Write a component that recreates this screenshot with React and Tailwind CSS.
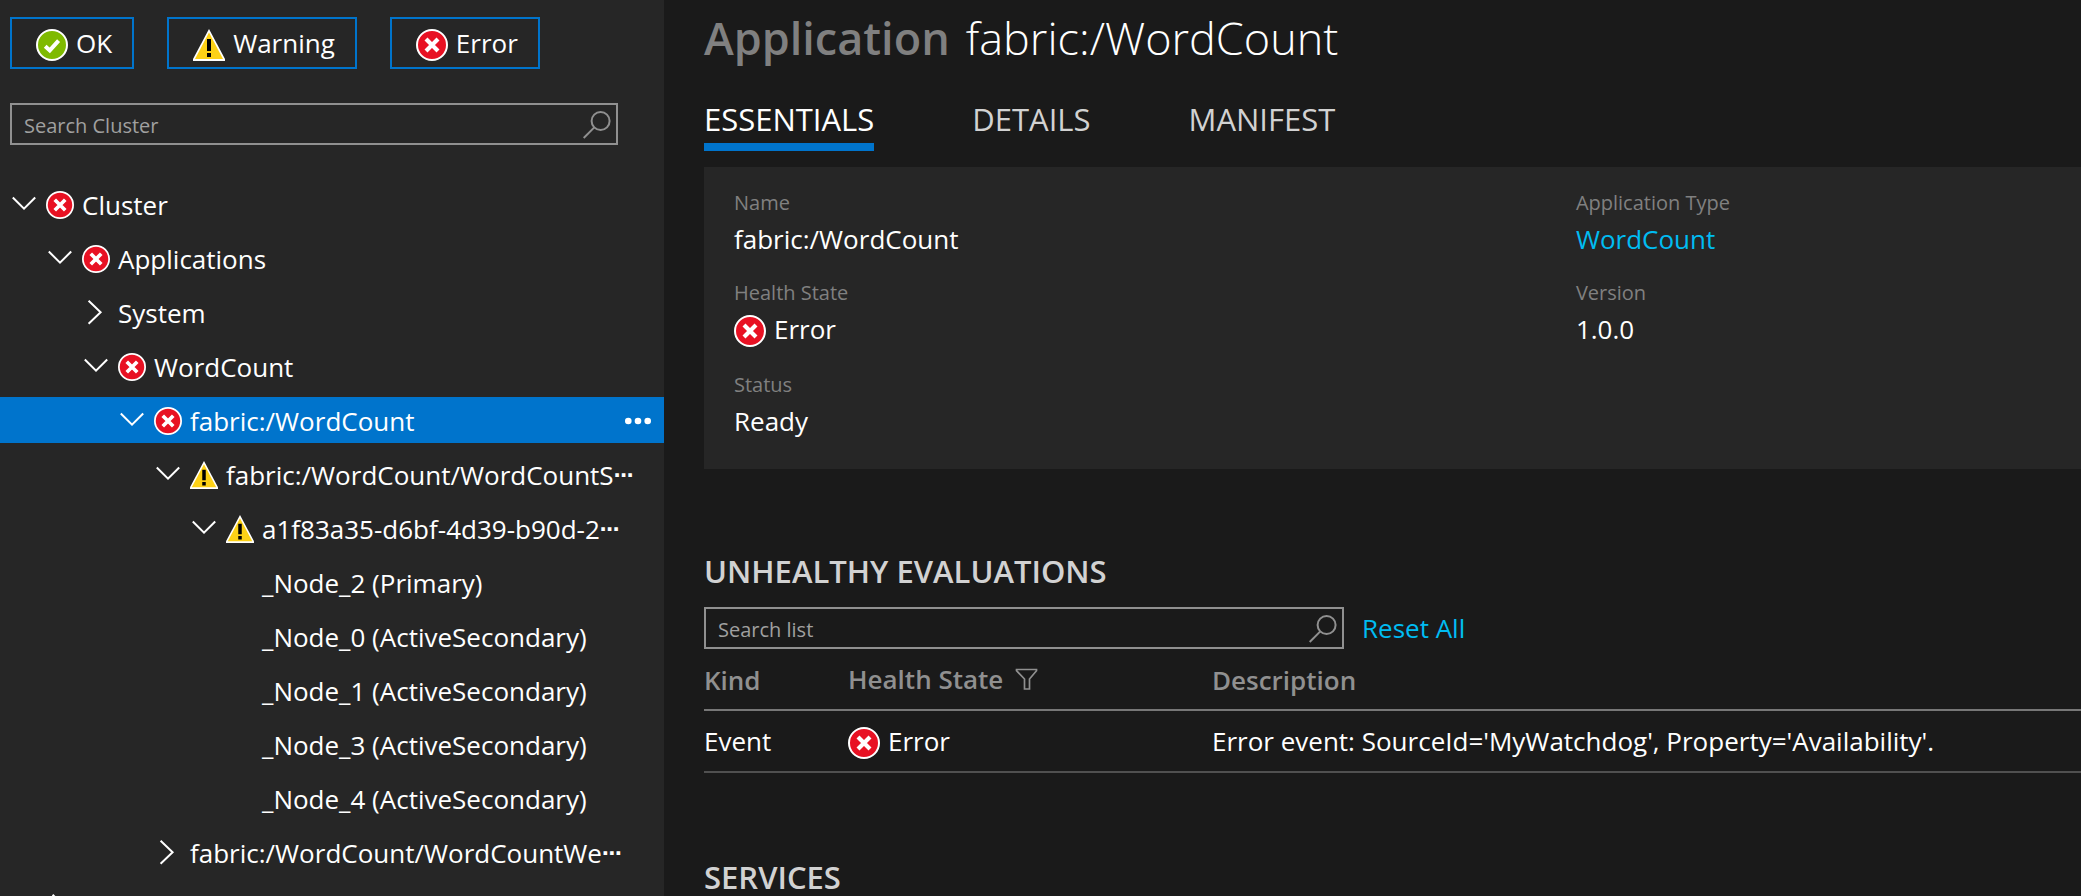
import { useState } from 'react';

function OkIcon({ className }) {
  return (
    <svg viewBox="0 0 32 32" className={className} aria-hidden="true">
      <circle cx="16" cy="16" r="15" fill="#7fba00" stroke="#fff" strokeWidth="2" />
      <path d="M9.2 17.2l4.6 4.2L22.6 11.6" fill="none" stroke="#fff" strokeWidth="4" />
    </svg>
  );
}

function WarningIcon({ className }) {
  return (
    <svg viewBox="0 0 32 32" className={className} aria-hidden="true">
      <path d="M16 0L32 30v2H0v-2z" fill="#fff" />
      <path d="M16 3.6L30 30H2z" fill="#fdd116" />
      <path d="M14 10h4v12h-4zM14 24h4v4h-4z" fill="#000" />
    </svg>
  );
}

function ErrorIcon({ className }) {
  return (
    <svg viewBox="0 0 32 32" className={className} aria-hidden="true">
      <circle cx="16" cy="16" r="15" fill="#e81123" stroke="#fff" strokeWidth="2" />
      <path d="M10 10l12 12M22 10L10 22" fill="none" stroke="#fff" strokeWidth="4.2" />
    </svg>
  );
}

const stateIcons = { ok: OkIcon, warning: WarningIcon, error: ErrorIcon };

function StateLabel({ state, children }) {
  const Icon = stateIcons[state];
  return (
    <span className="flex items-center gap-2">
      <Icon className="mt-1 size-8 shrink-0" />
      <span>{children}</span>
    </span>
  );
}

function FilterButton({ state, children }) {
  return (
    <button type="button" className="flex h-[52px] items-center border-2 border-[#0074cc] pr-5 pl-6">
      <StateLabel state={state}>{children}</StateLabel>
    </button>
  );
}

function SearchBox({ label, className }) {
  return (
    <label className={`flex h-[42px] items-center border-2 border-[#909090] pt-0.5 pr-[5px] pl-3 ${className}`}>
      <input
        type="text"
        aria-label={label}
        placeholder={label}
        className="h-full min-w-0 flex-1 bg-transparent text-[20px] text-white outline-none placeholder:text-[#a0a0a0]"
      />
      <svg viewBox="0 0 28 28" className="size-7 shrink-0" fill="none" stroke="#909090" strokeWidth="2" aria-hidden="true">
        <circle cx="17.6" cy="10" r="9" />
        <path d="M11.3 16.4L.7 27" />
      </svg>
    </label>
  );
}

function Chevron({ open }) {
  return (
    <svg viewBox="0 0 24 26" className="h-[26px] w-6 shrink-0" fill="none" stroke="#fff" strokeWidth="2" aria-hidden="true">
      {open ? <path d="M.8 5.5L12 16.7 23.2 5.5" /> : <path d="M4.6 .8L16.6 12.3 4.6 23.8" />}
    </svg>
  );
}

const indents = ['pl-3', 'pl-12', 'pl-[84px]', 'pl-[120px]', 'pl-[156px]', 'pl-[192px]', 'pl-[228px]'];

const tree = [
  { level: 0, label: 'Cluster', state: 'error', open: true },
  { level: 1, label: 'Applications', state: 'error', open: true },
  { level: 2, label: 'System', open: false },
  { level: 2, label: 'WordCount', state: 'error', open: true },
  { level: 3, label: 'fabric:/WordCount', state: 'error', open: true, selected: true },
  { level: 4, label: 'fabric:/WordCount/WordCountS', cut: true, state: 'warning', open: true },
  { level: 5, label: 'a1f83a35-d6bf-4d39-b90d-2', cut: true, state: 'warning', open: true },
  { level: 6, label: '_Node_2 (Primary)' },
  { level: 6, label: '_Node_0 (ActiveSecondary)' },
  { level: 6, label: '_Node_1 (ActiveSecondary)' },
  { level: 6, label: '_Node_3 (ActiveSecondary)' },
  { level: 6, label: '_Node_4 (ActiveSecondary)' },
  { level: 4, label: 'fabric:/WordCount/WordCountWe', cut: true, open: false },
  { level: 1, label: '', open: false },
];

function TreeRow({ item }) {
  const Icon = item.state && stateIcons[item.state];
  const expandable = item.open !== undefined;
  return (
    <li className={`flex h-[46px] shrink-0 items-center pt-0.5 pr-3 ${indents[item.level]} ${item.selected ? 'bg-[#0074cc]' : ''}`}>
      {expandable ? (
        <button type="button" aria-label={item.open ? 'Collapse' : 'Expand'} className="mr-2.5">
          <Chevron open={item.open} />
        </button>
      ) : (
        <span className="mr-2.5 w-6" />
      )}
      {Icon && <Icon className="mr-2 size-7 shrink-0" />}
      <a href="#" className="flex items-center whitespace-nowrap">
        {item.label}
        {item.cut && <span className="font-['DejaVu_Sans',sans-serif] text-[20px] font-bold">⋯</span>}
      </a>
      {item.selected && (
        <button type="button" aria-label="Actions" className="ml-auto">
          <svg viewBox="0 0 28 12" className="h-3 w-7" fill="#fff" aria-hidden="true">
            <circle cx="4.3" cy="6" r="3.3" />
            <circle cx="14" cy="6" r="3.3" />
            <circle cx="23.7" cy="6" r="3.3" />
          </svg>
        </button>
      )}
    </li>
  );
}

function Field({ label, children }) {
  return (
    <div className="flex flex-col gap-1.5">
      <dt className="text-[20px] leading-6 text-[#808080]">{label}</dt>
      <dd className="leading-9">{children}</dd>
    </div>
  );
}

function SectionTitle({ children }) {
  return <h2 className="text-[31px] leading-10 font-semibold text-[#d2d2d2]">{children}</h2>;
}

const tabs = ['ESSENTIALS', 'DETAILS', 'MANIFEST'];

export default function App() {
  const [tab, setTab] = useState('ESSENTIALS');
  return (
    <div className="flex h-screen overflow-hidden bg-[#1a1a1a] font-['Open_Sans','Noto_Sans',sans-serif] text-[26px] leading-9 text-white">
      <aside className="flex w-[664px] shrink-0 flex-col overflow-hidden bg-[#262626] pt-[17px]">
        <div className="flex gap-[33px] px-2.5">
          <FilterButton state="ok">OK</FilterButton>
          <FilterButton state="warning">Warning</FilterButton>
          <FilterButton state="error">Error</FilterButton>
        </div>
        <SearchBox label="Search Cluster" className="mt-[34px] mr-[46px] ml-2.5 shrink-0" />
        <ul className="mt-9 flex flex-col gap-2">
          {tree.map((item) => (
            <TreeRow key={item.label} item={item} />
          ))}
        </ul>
      </aside>

      <main className="flex min-w-0 flex-1 flex-col overflow-hidden pt-2.5 pl-10">
        <h1 className="flex shrink-0 gap-4 text-[45px] leading-[56px] font-light">
          <span className="font-semibold text-[#808080]">Application</span>
          <span>fabric:/WordCount</span>
        </h1>

        <nav className="mt-[33px] flex shrink-0 gap-[98px]">
          {tabs.map((name) => (
            <button
              key={name}
              type="button"
              onClick={() => setTab(name)}
              className={`border-b-8 pb-1 text-[31px] leading-10 ${tab === name ? 'border-[#0074cc] text-white' : 'border-transparent text-[#d2d2d2]'}`}
            >
              {name}
            </button>
          ))}
        </nav>

        <section className="mt-4 grid shrink-0 grid-cols-[5fr_3fr] bg-[#262626] pt-6 pb-[30px] pl-[30px]">
          <dl className="flex flex-col gap-6">
            <Field label="Name">fabric:/WordCount</Field>
            <Field label="Health State">
              <div className="pb-0.5">
                <StateLabel state="error">Error</StateLabel>
              </div>
            </Field>
            <Field label="Status">Ready</Field>
          </dl>
          <dl className="flex flex-col gap-6">
            <Field label="Application Type">
              <a href="#" className="text-[#00bcf2]">WordCount</a>
            </Field>
            <Field label="Version">1.0.0</Field>
          </dl>
        </section>

        <section className="mt-[82px] shrink-0">
          <SectionTitle>UNHEALTHY EVALUATIONS</SectionTitle>
          <div className="mt-4 flex items-center gap-[18px]">
            <SearchBox label="Search list" className="w-[640px]" />
            <a href="#" className="text-[#00bcf2]">Reset All</a>
          </div>
          <table className="w-full table-fixed border-separate border-spacing-0 text-left">
            <thead className="text-[#909090]">
              <tr className="h-[62px]">
                <th className="w-36 border-b-2 border-[#777777] px-0 pt-0.5 pb-0 font-semibold">Kind</th>
                <th className="w-[364px] border-b-2 border-[#777777] p-0 font-semibold">
                  <span className="flex items-center gap-3">
                    Health State
                    <button type="button" aria-label="Filter">
                      <svg viewBox="0 0 24 24" className="size-6" fill="none" stroke="#909090" strokeWidth="1.7" aria-hidden="true">
                        <path d="M1.5 2.5h20v1.2l-7 8.3v10h-5V12l-8-8.3z" />
                      </svg>
                    </button>
                  </span>
                </th>
                <th className="border-b-2 border-[#777777] px-0 pt-0.5 pb-0 font-semibold">Description</th>
              </tr>
            </thead>
            <tbody>
              <tr className="h-[62px]">
                <td className="border-b-2 border-[#505050] p-0">Event</td>
                <td className="border-b-2 border-[#505050] p-0">
                  <StateLabel state="error">Error</StateLabel>
                </td>
                <td className="border-b-2 border-[#505050] p-0">
                  Error event: SourceId='MyWatchdog', Property='Availability'.
                </td>
              </tr>
            </tbody>
          </table>
        </section>

        <section className="mt-[84px] shrink-0">
          <SectionTitle>SERVICES</SectionTitle>
        </section>
      </main>
    </div>
  );
}
